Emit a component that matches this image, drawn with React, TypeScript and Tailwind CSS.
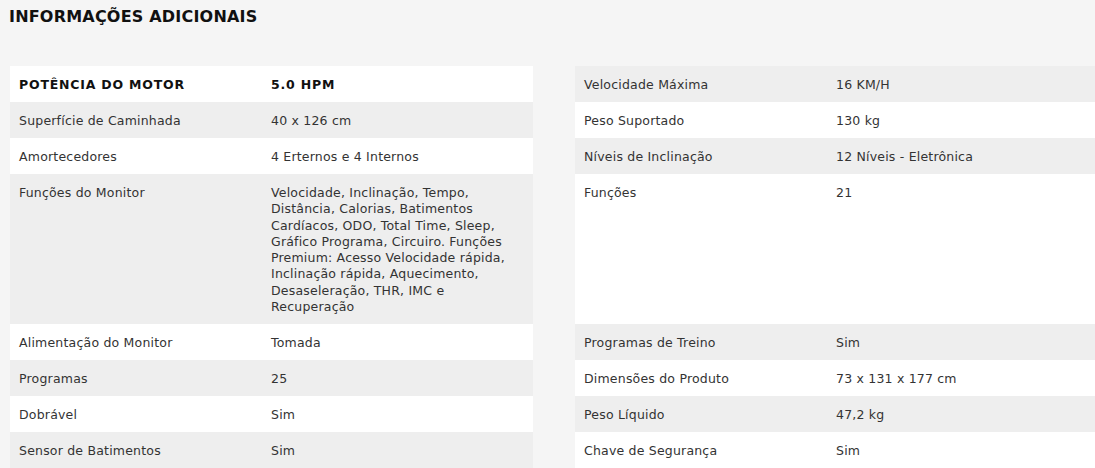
import React from 'react';

type Spec = { label: string; value: string };

const left: Spec[] = [
  { label: 'Superfície de Caminhada', value: '40 x 126 cm' },
  { label: 'Amortecedores', value: '4 Erternos e 4 Internos' },
  {
    label: 'Funções do Monitor',
    value:
      'Velocidade, Inclinação, Tempo, Distância, Calorias, Batimentos Cardíacos, ODO, Total Time, Sleep, Gráfico Programa, Circuiro. Funções Premium: Acesso Velocidade rápida, Inclinação rápida, Aquecimento, Desaseleração, THR, IMC e Recuperação',
  },
  { label: 'Alimentação do Monitor', value: 'Tomada' },
  { label: 'Programas', value: '25' },
  { label: 'Dobrável', value: 'Sim' },
  { label: 'Sensor de Batimentos', value: 'Sim' },
];

const right: Spec[] = [
  { label: 'Velocidade Máxima', value: '16 KM/H' },
  { label: 'Peso Suportado', value: '130 kg' },
  { label: 'Níveis de Inclinação', value: '12 Níveis - Eletrônica' },
  { label: 'Funções', value: '21' },
  { label: 'Programas de Treino', value: 'Sim' },
  { label: 'Dimensões do Produto', value: '73 x 131 x 177 cm' },
  { label: 'Peso Líquido', value: '47,2 kg' },
  { label: 'Chave de Segurança', value: 'Sim' },
];

function Row({ spec, shaded, tall }: { spec: Spec; shaded: boolean; tall?: boolean }) {
  return (
    <div className={`grid grid-cols-[252px_1fr] ${shaded ? 'bg-[#eeeeee]' : 'bg-white'} ${tall ? 'h-[150px]' : 'h-9'}`}>
      <div className="px-[9px] pt-[11px] pb-[9px]">{spec.label}</div>
      <div className="pt-[11px] pr-4 pb-[9px] pl-[9px]">{spec.value}</div>
    </div>
  );
}

export default function App() {
  return (
    <div className="h-[468px] w-[1095px] overflow-hidden bg-[#f5f5f5] font-['DejaVu_Sans',sans-serif] text-[12.5px] leading-[16.25px] tracking-[0.2px] text-[#333]">
      <h2 className="px-[9px] pt-[7px] text-[16px] leading-[20px] font-bold text-[#111]">
        INFORMAÇÕES ADICIONAIS
      </h2>

      <div className="mt-[39px] flex gap-[42px] pl-[10px]">
        {/* coluna esquerda */}
        <div className="w-[523px] shrink-0">
          <div className="grid h-9 grid-cols-[252px_1fr] bg-white font-bold tracking-[0.8px] text-[#111]">
            <div className="px-[9px] pt-[11px] pb-[9px]">POTÊNCIA DO MOTOR</div>
            <div className="px-[9px] pt-[11px] pb-[9px]">5.0 HPM</div>
          </div>
          {left.map((s, i) => (
            <Row key={s.label} spec={s} shaded={i % 2 === 0} tall={i === 2} />
          ))}
        </div>

        {/* coluna direita */}
        <div className="w-[523px] shrink-0">
          {right.map((s, i) => (
            <Row key={s.label} spec={s} shaded={i % 2 === 0} tall={i === 3} />
          ))}
        </div>
      </div>
    </div>
  );
}
